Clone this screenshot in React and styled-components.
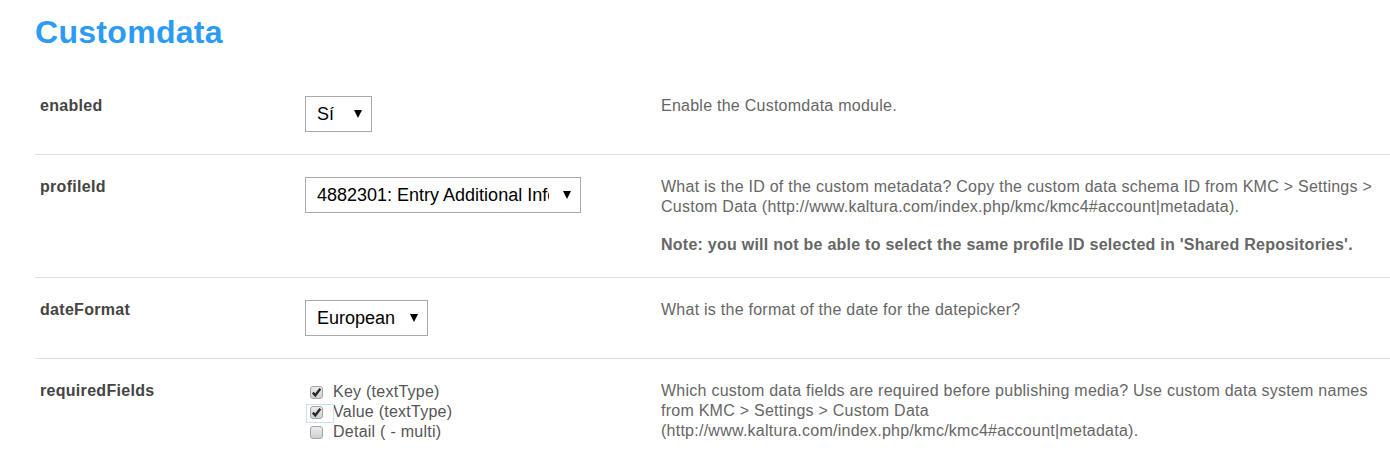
import React from 'react';
import styled, { createGlobalStyle } from 'styled-components';

const GlobalStyle = createGlobalStyle`
  body {
    margin: 0;
    background: #fff;
    font-family: "Liberation Sans", Arial, sans-serif;
  }
`;

const Page = styled.div`
  padding: 14px 0 0 35px;
`;

const Title = styled.h1`
  margin: 0 0 23px 0;
  font-size: 32px;
  line-height: 37px;
  font-weight: 700;
  letter-spacing: 0.3px;
  color: #2c9bf4;
`;

const Table = styled.div`
  display: flex;
  flex-direction: column;
`;

const Row = styled.div`
  display: grid;
  grid-template-columns: 265px 356px 1fr;
  padding: 22px 0;
  border-bottom: 1px solid #dfdfdf;
`;

const Cell = styled.div`
  padding: 0 5px;
`;

const Label = styled.div`
  font-size: 16px;
  line-height: 20px;
  font-weight: 700;
  letter-spacing: 0.3px;
  color: #444;
`;

const Desc = styled.div`
  max-width: 725px;
  font-size: 16px;
  line-height: 20px;
  letter-spacing: 0.25px;
  color: #666;
`;

const Para = styled.p`
  margin: 0;
  font-weight: ${(p) => (p.$bold ? 700 : 400)};

  & + & {
    margin-top: 18px;
  }
`;

const SelectBox = styled.div`
  display: flex;
  align-items: center;
  box-sizing: border-box;
  width: ${(p) => p.$width}px;
  height: 36px;
  padding: 0 9px 0 11px;
  border: 1px solid #a9a9a9;
  background: #fff;
  font-size: 18px;
  color: #000;
`;

const SelectText = styled.span`
  flex: 1;
  overflow: hidden;
  white-space: nowrap;
`;

const Arrow = styled.span`
  margin-left: 14px;
  width: 0;
  height: 0;
  border-left: 4px solid transparent;
  border-right: 4px solid transparent;
  border-top: 8px solid #000;
`;

const CheckList = styled.div`
  display: flex;
  flex-direction: column;
  padding-top: 1px;
`;

const CheckRow = styled.label`
  display: flex;
  align-items: center;
  height: 20px;
  font-size: 16px;
  letter-spacing: 0.25px;
  color: #555;
`;

const Box = styled.span`
  position: relative;
  display: inline-flex;
  align-items: center;
  justify-content: center;
  box-sizing: border-box;
  width: 13px;
  height: 13px;
  margin: 0 10px 0 5px;
  border: 1px solid #a4a4a4;
  border-radius: 3px;
  background: linear-gradient(#ececec, #cfcfcf);

  &::after {
    content: '';
    display: ${(p) => (p.$focused ? 'block' : 'none')};
    position: absolute;
    left: -5px;
    top: -3px;
    width: 26px;
    height: 17px;
    border: 1px solid #c9e2f2;
  }
`;

const Select = ({ width, value }) => (
  <SelectBox $width={width}>
    <SelectText>{value}</SelectText>
    <Arrow />
  </SelectBox>
);

const Checkbox = ({ checked, focused, children }) => (
  <CheckRow>
    <Box $focused={focused}>
      {checked && (
        <svg width="11" height="11" viewBox="0 0 11 11">
          <path d="M1.8 5.6 L4.3 8.3 L9.3 1.8" fill="none" stroke="#2a2a2a" strokeWidth="2.4" />
        </svg>
      )}
    </Box>
    {children}
  </CheckRow>
);

export default function App() {
  return (
    <Page>
      <GlobalStyle />
      <Title>Customdata</Title>
      <Table>
        <Row>
          <Cell>
            <Label>enabled</Label>
          </Cell>
          <Cell>
            <Select width={67} value="Sí" />
          </Cell>
          <Cell>
            <Desc>
              <Para>Enable the Customdata module.</Para>
            </Desc>
          </Cell>
        </Row>
        <Row>
          <Cell>
            <Label>profileId</Label>
          </Cell>
          <Cell>
            <Select width={276} value="4882301: Entry Additional Info" />
          </Cell>
          <Cell>
            <Desc>
              <Para>
                What is the ID of the custom metadata? Copy the custom data schema ID from KMC &gt; Settings &gt; Custom Data (http://www.kaltura.com/index.php/kmc/kmc4#account|metadata).
              </Para>
              <Para $bold>
                Note: you will not be able to select the same profile ID selected in 'Shared Repositories'.
              </Para>
            </Desc>
          </Cell>
        </Row>
        <Row>
          <Cell>
            <Label>dateFormat</Label>
          </Cell>
          <Cell>
            <Select width={123} value="European" />
          </Cell>
          <Cell>
            <Desc>
              <Para>What is the format of the date for the datepicker?</Para>
            </Desc>
          </Cell>
        </Row>
        <Row>
          <Cell>
            <Label>requiredFields</Label>
          </Cell>
          <Cell>
            <CheckList>
              <Checkbox checked>Key (textType)</Checkbox>
              <Checkbox checked focused>Value (textType)</Checkbox>
              <Checkbox>Detail ( - multi)</Checkbox>
            </CheckList>
          </Cell>
          <Cell>
            <Desc>
              <Para>
                Which custom data fields are required before publishing media? Use custom data system names from KMC &gt; Settings &gt; Custom Data (http://www.kaltura.com/index.php/kmc/kmc4#account|metadata).
              </Para>
            </Desc>
          </Cell>
        </Row>
      </Table>
    </Page>
  );
}
